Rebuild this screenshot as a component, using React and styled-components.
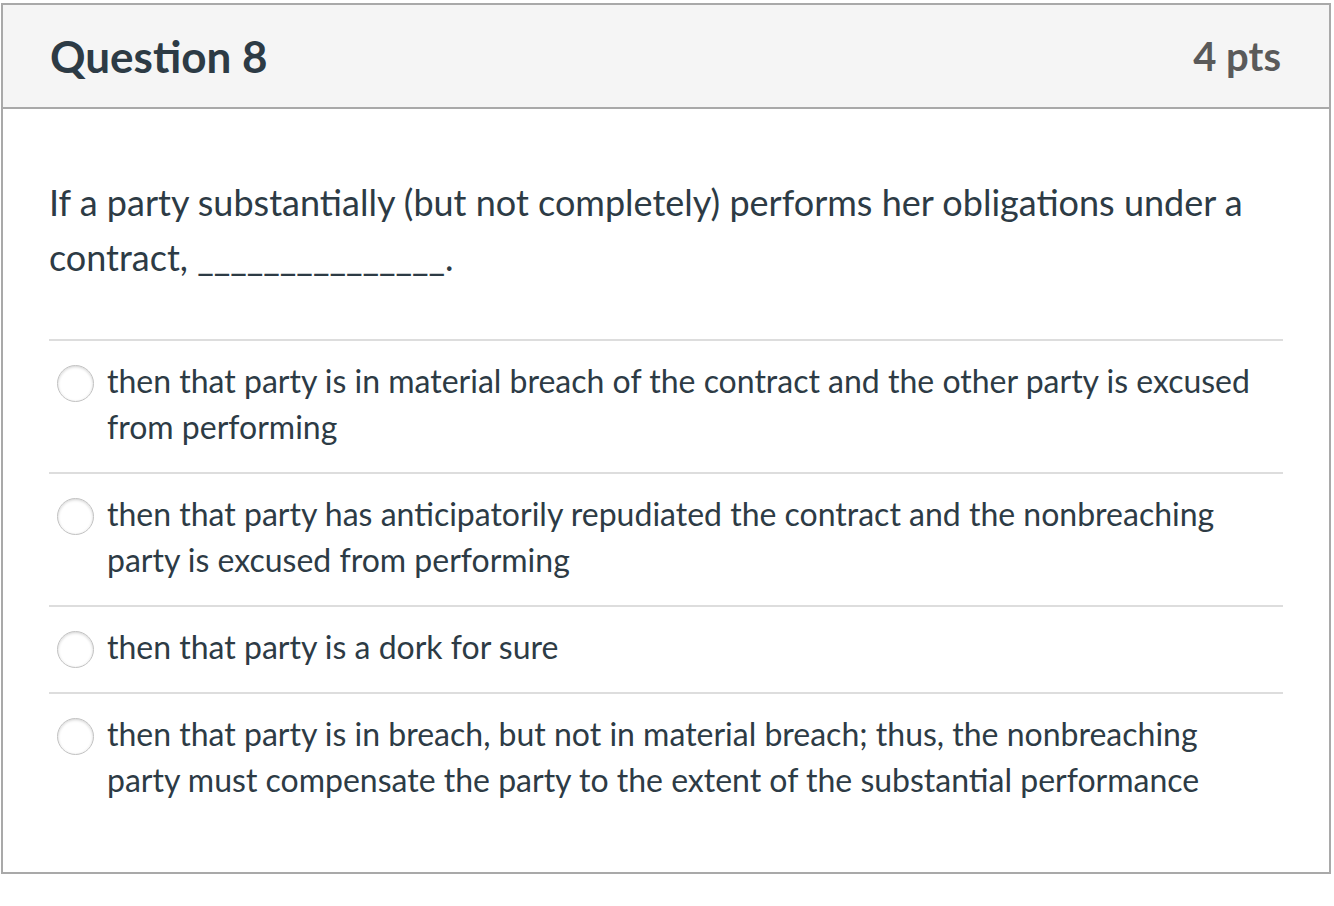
import React from "react";
import styled, { createGlobalStyle } from "styled-components";

const GlobalStyle = createGlobalStyle`
  html, body {
    margin: 0;
    padding: 0;
    background: #ffffff;
  }
  body {
    font-family: Lato, "Liberation Sans", sans-serif;
    color: #2d3b45;
  }
`;

const Page = styled.div`
  padding: 3px 3px 0 1px;
`;

const Card = styled.div`
  border: 2px solid #a9a9a9;
  background: #ffffff;
`;

const Header = styled.div`
  display: flex;
  align-items: center;
  justify-content: space-between;
  height: 102px;
  padding: 0 48px 0 47px;
  background: #f5f5f5;
  border-bottom: 2px solid #a9a9a9;
`;

const Title = styled.h2`
  margin: 0;
  font-size: 44px;
  font-weight: 700;
  color: #2d3b45;
`;

const Points = styled.div`
  font-size: 40px;
  font-weight: 700;
  color: #5a5a5a;
`;

const Body = styled.div`
  padding: 66px 46px 47px 46px;
`;

const Prompt = styled.p`
  margin: 0 0 54px;
  font-size: 36px;
  line-height: 55px;
`;

const Answer = styled.label`
  display: flex;
  align-items: flex-start;
  gap: 13px;
  padding: 17px 12px 22px 8px;
  border-top: 2px solid #dddddd;
`;

const Radio = styled.span`
  flex: none;
  box-sizing: border-box;
  width: 37px;
  height: 37px;
  margin-top: 7px;
  border-radius: 50%;
  border: 1px solid #c2c2c2;
  background: #ffffff;
  box-shadow: inset 0 1px 3px rgba(0, 0, 0, 0.18);
`;

const AnswerText = styled.span`
  font-size: 32px;
  line-height: 46px;
`;

const answers = [
  "then that party is in material breach of the contract and the other party is excused from performing",
  "then that party has anticipatorily repudiated the contract and the nonbreaching party is excused from performing",
  "then that party is a dork for sure",
  "then that party is in breach, but not in material breach; thus, the nonbreaching party must compensate the party to the extent of the substantial performance",
];

export default function App() {
  return (
    <>
      <GlobalStyle />
      <Page>
        <Card>
          <Header>
            <Title>Question 8</Title>
            <Points>4 pts</Points>
          </Header>
          <Body>
            <Prompt>
              If a party substantially (but not completely) performs her obligations under a contract, _______________.
            </Prompt>
            {answers.map((a) => (
              <Answer key={a}>
                <Radio />
                <AnswerText>{a}</AnswerText>
              </Answer>
            ))}
          </Body>
        </Card>
      </Page>
    </>
  );
}
